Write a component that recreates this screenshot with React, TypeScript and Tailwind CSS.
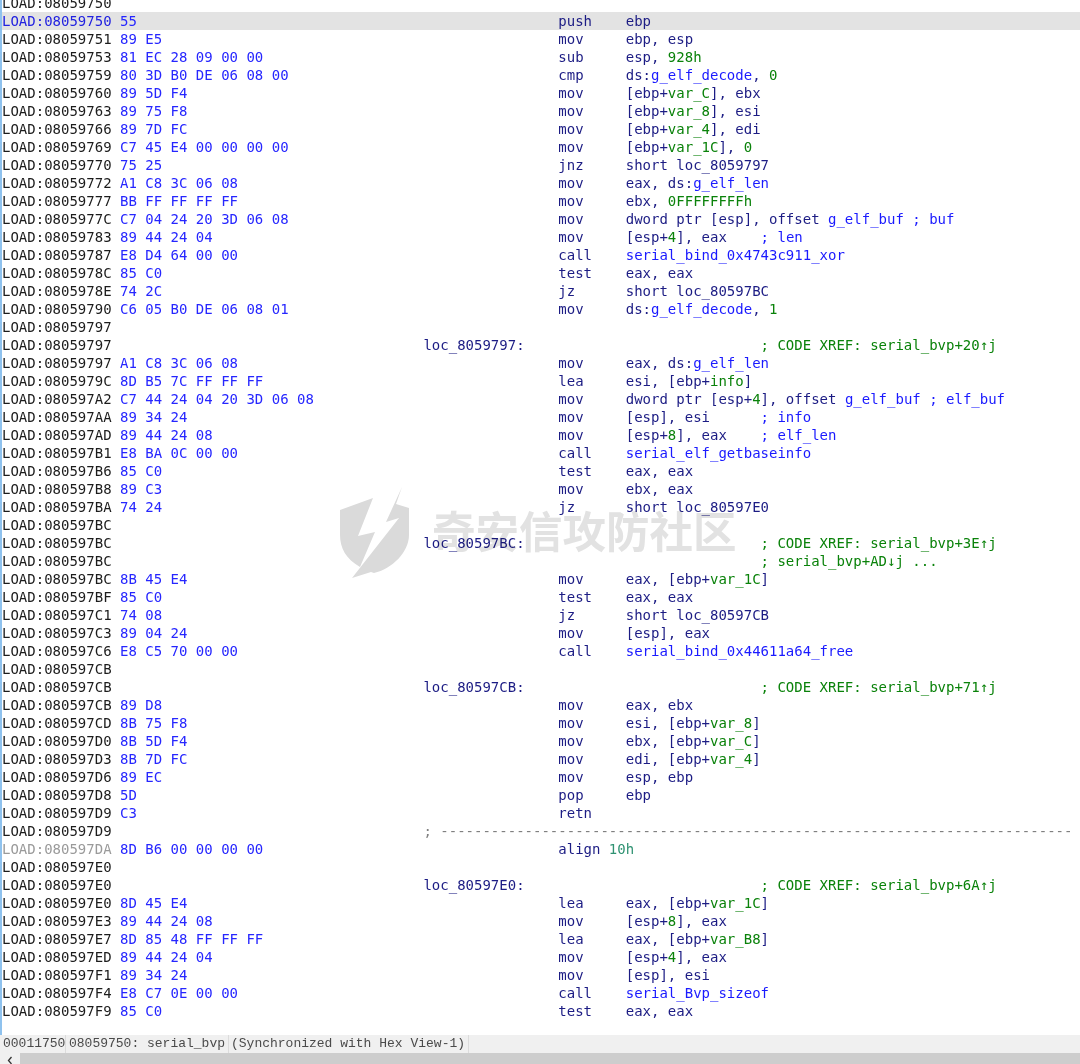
type Row = {
  addr: string
  hex?: string
  label?: string
  mn?: string
  op?: string
  active?: boolean
  dim?: boolean
}

const PAD = '                '

const ROWS: Row[] = [
  { addr: '08059750' },
  { addr: '08059750', hex: '55', mn: 'push', op: 'ebp', active: true },
  { addr: '08059751', hex: '89 E5', mn: 'mov', op: 'ebp, esp' },
  { addr: '08059753', hex: '81 EC 28 09 00 00', mn: 'sub', op: 'esp, <928h>' },
  { addr: '08059759', hex: '80 3D B0 DE 06 08 00', mn: 'cmp', op: 'ds:{g_elf_decode}, <0>' },
  { addr: '08059760', hex: '89 5D F4', mn: 'mov', op: '[ebp+<var_C>], ebx' },
  { addr: '08059763', hex: '89 75 F8', mn: 'mov', op: '[ebp+<var_8>], esi' },
  { addr: '08059766', hex: '89 7D FC', mn: 'mov', op: '[ebp+<var_4>], edi' },
  { addr: '08059769', hex: 'C7 45 E4 00 00 00 00', mn: 'mov', op: '[ebp+<var_1C>], <0>' },
  { addr: '08059770', hex: '75 25', mn: 'jnz', op: 'short loc_8059797' },
  { addr: '08059772', hex: 'A1 C8 3C 06 08', mn: 'mov', op: 'eax, ds:{g_elf_len}' },
  { addr: '08059777', hex: 'BB FF FF FF FF', mn: 'mov', op: 'ebx, <0FFFFFFFFh>' },
  { addr: '0805977C', hex: 'C7 04 24 20 3D 06 08', mn: 'mov', op: 'dword ptr [esp], offset {g_elf_buf ; buf}' },
  { addr: '08059783', hex: '89 44 24 04', mn: 'mov', op: '[esp+<4>], eax    {; len}' },
  { addr: '08059787', hex: 'E8 D4 64 00 00', mn: 'call', op: '{serial_bind_0x4743c911_xor}' },
  { addr: '0805978C', hex: '85 C0', mn: 'test', op: 'eax, eax' },
  { addr: '0805978E', hex: '74 2C', mn: 'jz', op: 'short loc_80597BC' },
  { addr: '08059790', hex: 'C6 05 B0 DE 06 08 01', mn: 'mov', op: 'ds:{g_elf_decode}, <1>' },
  { addr: '08059797' },
  { addr: '08059797', label: 'loc_8059797:', op: `${PAD}<; CODE XREF: serial_bvp+20↑j>` },
  { addr: '08059797', hex: 'A1 C8 3C 06 08', mn: 'mov', op: 'eax, ds:{g_elf_len}' },
  { addr: '0805979C', hex: '8D B5 7C FF FF FF', mn: 'lea', op: 'esi, [ebp+<info>]' },
  { addr: '080597A2', hex: 'C7 44 24 04 20 3D 06 08', mn: 'mov', op: 'dword ptr [esp+<4>], offset {g_elf_buf ; elf_buf}' },
  { addr: '080597AA', hex: '89 34 24', mn: 'mov', op: '[esp], esi      {; info}' },
  { addr: '080597AD', hex: '89 44 24 08', mn: 'mov', op: '[esp+<8>], eax    {; elf_len}' },
  { addr: '080597B1', hex: 'E8 BA 0C 00 00', mn: 'call', op: '{serial_elf_getbaseinfo}' },
  { addr: '080597B6', hex: '85 C0', mn: 'test', op: 'eax, eax' },
  { addr: '080597B8', hex: '89 C3', mn: 'mov', op: 'ebx, eax' },
  { addr: '080597BA', hex: '74 24', mn: 'jz', op: 'short loc_80597E0' },
  { addr: '080597BC' },
  { addr: '080597BC', label: 'loc_80597BC:', op: `${PAD}<; CODE XREF: serial_bvp+3E↑j>` },
  { addr: '080597BC', op: `${PAD}<; serial_bvp+AD↓j ...>` },
  { addr: '080597BC', hex: '8B 45 E4', mn: 'mov', op: 'eax, [ebp+<var_1C>]' },
  { addr: '080597BF', hex: '85 C0', mn: 'test', op: 'eax, eax' },
  { addr: '080597C1', hex: '74 08', mn: 'jz', op: 'short loc_80597CB' },
  { addr: '080597C3', hex: '89 04 24', mn: 'mov', op: '[esp], eax' },
  { addr: '080597C6', hex: 'E8 C5 70 00 00', mn: 'call', op: '{serial_bind_0x44611a64_free}' },
  { addr: '080597CB' },
  { addr: '080597CB', label: 'loc_80597CB:', op: `${PAD}<; CODE XREF: serial_bvp+71↑j>` },
  { addr: '080597CB', hex: '89 D8', mn: 'mov', op: 'eax, ebx' },
  { addr: '080597CD', hex: '8B 75 F8', mn: 'mov', op: 'esi, [ebp+<var_8>]' },
  { addr: '080597D0', hex: '8B 5D F4', mn: 'mov', op: 'ebx, [ebp+<var_C>]' },
  { addr: '080597D3', hex: '8B 7D FC', mn: 'mov', op: 'edi, [ebp+<var_4>]' },
  { addr: '080597D6', hex: '89 EC', mn: 'mov', op: 'esp, ebp' },
  { addr: '080597D8', hex: '5D', mn: 'pop', op: 'ebp' },
  { addr: '080597D9', hex: 'C3', mn: 'retn' },
  { addr: '080597D9', label: 'divider' },
  { addr: '080597DA', hex: '8D B6 00 00 00 00', mn: 'align [10h]', dim: true },
  { addr: '080597E0' },
  { addr: '080597E0', label: 'loc_80597E0:', op: `${PAD}<; CODE XREF: serial_bvp+6A↑j>` },
  { addr: '080597E0', hex: '8D 45 E4', mn: 'lea', op: 'eax, [ebp+<var_1C>]' },
  { addr: '080597E3', hex: '89 44 24 08', mn: 'mov', op: '[esp+<8>], eax' },
  { addr: '080597E7', hex: '8D 85 48 FF FF FF', mn: 'lea', op: 'eax, [ebp+<var_B8>]' },
  { addr: '080597ED', hex: '89 44 24 04', mn: 'mov', op: '[esp+<4>], eax' },
  { addr: '080597F1', hex: '89 34 24', mn: 'mov', op: '[esp], esi' },
  { addr: '080597F4', hex: 'E8 C7 0E 00 00', mn: 'call', op: '{serial_Bvp_sizeof}' },
  { addr: '080597F9', hex: '85 C0', mn: 'test', op: 'eax, eax' },
]

// {x} is a name (blue), <x> is a number or local var (green), the rest is navy
function Operand({ text }: { text: string }) {
  const parts = text.split(/(\{[^}]*\}|<[^>]*>|\[10h\])/)
  return (
    <>
      {parts.map((part, i) => {
        if (part === '[10h]') return <span key={i} className="text-[#2f9272]">10h</span>
        if (part.startsWith('{')) return <span key={i} className="text-[#1a1aff]">{part.slice(1, -1)}</span>
        if (part.startsWith('<')) return <span key={i} className="text-[#0a820a]">{part.slice(1, -1)}</span>
        return <span key={i}>{part}</span>
      })}
    </>
  )
}

function ListingRow({ row }: { row: Row }) {
  const isDivider = row.label === 'divider'
  return (
    <div className={`flex h-[18px] whitespace-pre leading-[18px] ${row.active ? 'bg-[#e3e3e3]' : ''}`}>
      <span className={`w-[14ch] shrink-0 ${row.active ? 'text-[#2222e0]' : row.dim ? 'text-[#9a9a9a]' : 'text-[#1c1c1c]'}`}>
        LOAD:{row.addr}
      </span>
      <span className="w-[36ch] shrink-0 text-[#2626ff]">{row.hex}</span>
      {isDivider ? (
        <span className="text-[#808080]">; {'-'.repeat(75)}</span>
      ) : (
        <>
          <span className="w-[16ch] shrink-0 text-[#1c1c84]">{row.label}</span>
          <span className="w-[8ch] shrink-0 text-[#1c1c84]">{row.mn && <Operand text={row.mn} />}</span>
          <span className="text-[#1c1c84]">{row.op && <Operand text={row.op} />}</span>
        </>
      )}
    </div>
  )
}

function Watermark() {
  return (
    <div className="pointer-events-none absolute left-[330px] top-[480px] flex items-center gap-[2px] mix-blend-multiply">
      <svg width="100" height="100" viewBox="0 0 100 100" aria-hidden="true">
        <path fill="#dadada" d="M10 30 L43 18 L28 56 L45 52 L30 87 C16 79 10 68 10 55 Z" />
        <path fill="#dadada" d="M72 7 L66 24 L79 28 V55 C79 72 62 89 44 93 L41 92 L22 98 L69 38 L56 42 Z" />
      </svg>
      <span className="whitespace-pre font-['Noto_Sans_CJK_SC',sans-serif] text-[43.5px] font-bold leading-none text-[#e2e2e2]">
        奇安信攻防社区
      </span>
    </div>
  )
}

export default function App() {
  return (
    <div className="relative flex h-[1064px] w-[1080px] flex-col overflow-hidden bg-white">
      <div className="flex-1 overflow-hidden border-l-2 border-[#8fc2ee] font-['DejaVu_Sans_Mono',monospace] text-[14px]">
        <div className="-mt-[6px]">
          {ROWS.map((row, i) => (
            <ListingRow key={i} row={row} />
          ))}
        </div>
      </div>
      <div className="flex h-[18px] items-center whitespace-pre bg-[#f0f0f0] font-['Liberation_Mono',monospace] text-[13px] leading-[18px] text-[#4a4a4a]">
        <span className="w-[66px] border-r border-[#dcdcdc] pl-[3px]">00011750</span>
        <span className="w-[163px] border-r border-[#dcdcdc] pl-[3px]">08059750: serial_bvp</span>
        <span className="w-[240px] border-r border-[#dcdcdc] pl-[2px]">(Synchronized with Hex View-1)</span>
      </div>
      <div className="flex h-[11px] bg-[#cdcdcd]">
        <div className="flex w-[20px] items-start justify-center bg-[#f0f0f0]">
          <svg width="8" height="11" viewBox="0 0 8 11" aria-hidden="true">
            <path d="M5.5 4 L2.5 7.5 L5.5 11" fill="none" stroke="#333333" strokeWidth="1.3" />
          </svg>
        </div>
      </div>
      <Watermark />
    </div>
  )
}
